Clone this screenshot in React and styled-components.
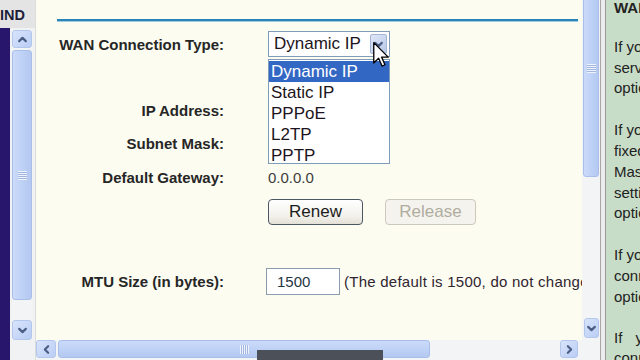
import React from 'react';
import styled, { createGlobalStyle } from 'styled-components';

const Global = createGlobalStyle`
  html, body { margin: 0; padding: 0; width: 640px; height: 360px; overflow: hidden; background: #fcfcf1; }
  * { box-sizing: border-box; }
`;

const Screen = styled.div`
  position: relative;
  width: 640px;
  height: 360px;
  display: flex;
  overflow: hidden;
  font-family: "Liberation Sans", Arial, sans-serif;
`;

/* ---------- left rail ---------- */
const LeftRail = styled.div`
  width: 36px;
  display: flex;
  flex-direction: column;
  background: #f1f2f4;
  border-right: 1px solid #dcdcdc;
`;
const RailHeader = styled.div`
  height: 28px;
  background: #e4e4e4;
  font-weight: bold;
  font-size: 14.5px;
  line-height: 30px;
  color: #1d1d38;
  white-space: nowrap;
  overflow: hidden;
  padding-left: 0;
`;
const RailBody = styled.div`
  flex: 1;
  display: flex;
`;
const NavyStrip = styled.div`
  width: 10px;
  background: #27166b;
`;

/* ---------- scrollbars ---------- */
const VBar = styled.div`
  width: ${p => p.$w}px;
  margin: ${p => p.$m};
  height: ${p => p.$h}px;
  display: flex;
  flex-direction: column;
  overflow: hidden;
  background: #f3f4f6;
`;
const HBar = styled.div`
  height: 18px;
  flex: 1;
  display: flex;
  align-items: stretch;
  background: #f3f4f6;
  padding-right: 4px;
`;
const ArrowBtn = styled.div`
  flex: none;
  width: ${p => p.$w || 'auto'};
  height: ${p => p.$h || 'auto'};
  margin: ${p => p.$m || '0'};
  background: linear-gradient(135deg, #d9e4fb, #b9cdf5);
  border: 1px solid #b3c6ec;
  border-radius: 3px;
  display: flex;
  align-items: center;
  justify-content: center;
`;
const Thumb = styled.div`
  flex: none;
  ${p => p.$vertical ? `height: ${p.$len}px;` : `width: ${p.$len}px;`}
  margin: ${p => p.$m || '0'};
  background: ${p => p.$vertical
    ? 'linear-gradient(90deg, #cbdaf9, #bcd0f6 60%, #b4c8f0)'
    : 'linear-gradient(180deg, #cbdaf9, #bcd0f6 60%, #b4c8f0)'};
  border: 1px solid #a9bfe9;
  border-radius: 3px;
  display: flex;
  align-items: center;
  justify-content: center;
`;
const Grip = styled.div`
  width: 9px;
  height: 9px;
  background: ${p => p.$vertical
    ? 'repeating-linear-gradient(180deg, #eef3fe 0 1px, #a3b6de 1px 2px)'
    : 'repeating-linear-gradient(90deg, #eef3fe 0 1px, #a3b6de 1px 2px)'};
`;
const TrackRest = styled.div`
  flex: 1;
`;

const Chevron = ({ dir }) => {
  const d = {
    up: 'M2,6.5 L5,3.5 L8,6.5',
    down: 'M2,3.5 L5,6.5 L8,3.5',
    left: 'M6.5,2 L3.5,5 L6.5,8',
    right: 'M3.5,2 L6.5,5 L3.5,8',
  }[dir];
  return (
    <svg width="11" height="11" viewBox="0 0 10 10">
      <path d={d} fill="none" stroke="#4b5f86" strokeWidth="2" strokeLinecap="round" strokeLinejoin="round" />
    </svg>
  );
};

/* ---------- frame ---------- */
const Frame = styled.div`
  width: 564px;
  display: flex;
  flex-direction: column;
  background: #f3f4f6;
`;
const FrameTop = styled.div`
  height: 340px;
  display: flex;
`;
const FrameBottom = styled.div`
  height: 20px;
  display: flex;
  padding-bottom: 2px;
`;
const Corner = styled.div`
  width: 18px;
`;

const Content = styled.div`
  width: 546px;
  height: 340px;
  overflow: hidden;
  background: #fcfcf1;
  padding-left: 21px;
  padding-top: 19px;
`;
const Rule = styled.div`
  width: 521px;
  height: 2px;
  background: #2a85b6;
  box-shadow: 0 1px 0 #9ccbe2;
`;

const Row = styled.div`
  display: grid;
  grid-template-columns: 167px 1fr;
  column-gap: 44px;
  align-items: center;
  height: ${p => p.$h}px;
  margin-top: ${p => p.$mt}px;
`;
const Label = styled.div`
  font-size: 15px;
  font-weight: bold;
  color: #262626;
  text-align: right;
  white-space: nowrap;
`;
const Value = styled.div`
  font-size: 15px;
  color: #3c3c3c;
  white-space: nowrap;
  display: flex;
  align-items: center;
`;

/* select */
const SelectWrap = styled.div`
  position: relative;
  width: 122px;
  height: 26px;
`;
const SelectBox = styled.div`
  width: 100%;
  height: 100%;
  border: 1px solid #7f9db9;
  background: #fff;
  display: flex;
  align-items: center;
  padding: 2px;
`;
const SelectText = styled.div`
  flex: 1;
  font-size: 17px;
  color: #1c1420;
  padding-left: 3px;
`;
const SelectBtn = styled.div`
  width: 17px;
  height: 20px;
  background: linear-gradient(135deg, #dfe7f7, #b8c8e8);
  border: 1px solid #a6b7d6;
  border-radius: 2px;
  display: flex;
  align-items: center;
  justify-content: center;
`;
const DropList = styled.div`
  position: absolute;
  top: 28px;
  left: 0;
  width: 122px;
  height: 105px;
  background: #fff;
  border: 1px solid #7f9db9;
  padding: 1px 0 0 0;
  z-index: 2;
`;
const DropItem = styled.div`
  height: 21px;
  line-height: 21px;
  font-size: 17px;
  padding-left: 2px;
  color: ${p => p.$active ? '#fff' : '#1c1420'};
  background: ${p => p.$active ? '#3367c4' : 'transparent'};
`;

/* buttons */
const BtnRow = styled.div`
  display: flex;
  gap: 22px;
`;
const Btn = styled.div`
  width: ${p => p.$w}px;
  height: 26px;
  border: 1px solid ${p => p.$disabled ? '#cbc9bd' : '#4d5763'};
  border-radius: 4px;
  background: ${p => p.$disabled ? '#f4f3ee' : 'linear-gradient(180deg, #ffffff, #f1f0ea 70%, #e2e0d6)'};
  color: ${p => p.$disabled ? '#b0ad9e' : '#1c1c1c'};
  font-size: 17px;
  display: flex;
  align-items: center;
  justify-content: center;
`;

/* mtu */
const Input = styled.div`
  width: 74px;
  height: 27px;
  margin-left: -2px;
  border: 1px solid #8a9cae;
  background: #fff;
  font-size: 15px;
  color: #1f3545;
  padding-left: 10px;
  display: flex;
  align-items: center;
`;
const Hint = styled.span`
  margin-left: 4px;
  font-size: 15px;
  letter-spacing: 0.25px;
  color: #302530;
`;

/* right panel */
const RightPanel = styled.div`
  flex: 1;
  display: flex;
  overflow: hidden;
`;
const Divider = styled.div`
  width: 6px;
  background: #ececec;
  border-left: 1px solid #a6a6a6;
  border-right: 1px solid #9a9a9a;
`;
const Help = styled.div`
  flex: 1;
  background: #c8ddc8;
  padding-left: 8px;
  margin-top: -2px;
  font-size: 15px;
  line-height: 20.8px;
  color: #222;
  white-space: nowrap;
  overflow: hidden;
`;
const HelpTitle = styled.div`
  font-weight: bold;
`;
const HelpPara = styled.div`
  margin-top: ${p => p.$mt}px;
`;
const HelpLine = styled.div`
  word-spacing: ${p => p.$spread ? '9px' : 'normal'};
`;

/* overlays */
const Cursor = styled.svg`
  position: absolute;
  left: 373px;
  top: 42px;
  z-index: 5;
`;
const DarkBar = styled.div`
  position: absolute;
  left: 257px;
  top: 350px;
  width: 126px;
  height: 10px;
  background: #4b5059;
  z-index: 4;
`;

export default function App() {
  const options = ['Dynamic IP', 'Static IP', 'PPPoE', 'L2TP', 'PPTP'];
  return (
    <>
      <Global />
      <Screen>
        <LeftRail>
          <RailHeader>IND</RailHeader>
          <RailBody>
            <NavyStrip />
            <VBar $w={20} $h={310} $m="2px 0 0 2px">
              <ArrowBtn $h="18px"><Chevron dir="up" /></ArrowBtn>
              <Thumb $vertical $len={250} $m="2px 0 0 0"><Grip $vertical /></Thumb>
              <TrackRest />
              <ArrowBtn $h="20px"><Chevron dir="down" /></ArrowBtn>
            </VBar>
          </RailBody>
        </LeftRail>

        <Frame>
          <FrameTop>
            <Content>
              <Rule />
              <Row $h={26} $mt={10}>
                <Label>WAN Connection Type:</Label>
                <Value>
                  <SelectWrap>
                    <SelectBox>
                      <SelectText>Dynamic IP</SelectText>
                      <SelectBtn><Chevron dir="down" /></SelectBtn>
                    </SelectBox>
                    <DropList>
                      {options.map((o, i) => (
                        <DropItem key={o} $active={i === 0}>{o}</DropItem>
                      ))}
                    </DropList>
                  </SelectWrap>
                </Value>
              </Row>
              <Row $h={34} $mt={36}>
                <Label>IP Address:</Label>
                <Value />
              </Row>
              <Row $h={33} $mt={0}>
                <Label>Subnet Mask:</Label>
                <Value />
              </Row>
              <Row $h={34} $mt={0}>
                <Label>Default Gateway:</Label>
                <Value>0.0.0.0</Value>
              </Row>
              <Row $h={26} $mt={5}>
                <Label />
                <BtnRow>
                  <Btn $w={95}>Renew</Btn>
                  <Btn $w={91} $disabled>Release</Btn>
                </BtnRow>
              </Row>
              <Row $h={27} $mt={43}>
                <Label>MTU Size (in bytes):</Label>
                <Value>
                  <Input>1500</Input>
                  <Hint>(The default is 1500, do not change unless necessary.)</Hint>
                </Value>
              </Row>
            </Content>
            <VBar $w={18} $h={340} $m="0">
              <Thumb $vertical $len={217} $m="-40px 1px 0 1px"><Grip $vertical /></Thumb>
              <TrackRest />
              <ArrowBtn $h="20px" $m="0 1px 2px 2px"><Chevron dir="down" /></ArrowBtn>
            </VBar>
          </FrameTop>
          <FrameBottom>
            <HBar>
              <ArrowBtn $w="20px"><Chevron dir="left" /></ArrowBtn>
              <Thumb $len={372} $m="0 0 0 2px"><Grip /></Thumb>
              <TrackRest />
              <ArrowBtn $w="18px"><Chevron dir="right" /></ArrowBtn>
            </HBar>
            <Corner />
          </FrameBottom>
        </Frame>

        <RightPanel>
          <Divider />
          <Help>
            <HelpTitle>WAN Connection Type:</HelpTitle>
            <HelpPara $mt={18}>
              <HelpLine>If your ISP is running a DHCP</HelpLine>
              <HelpLine>server, select Dynamic IP</HelpLine>
              <HelpLine>option.</HelpLine>
            </HelpPara>
            <HelpPara $mt={21}>
              <HelpLine>If your ISP provides a static or</HelpLine>
              <HelpLine>fixed IP Address, Subnet</HelpLine>
              <HelpLine>Mask, Gateway and DNS</HelpLine>
              <HelpLine>setting, select Static IP</HelpLine>
              <HelpLine>option.</HelpLine>
            </HelpPara>
            <HelpPara $mt={21}>
              <HelpLine>If your ISP provides a PPPoE</HelpLine>
              <HelpLine>connection, select PPPoE</HelpLine>
              <HelpLine>option.</HelpLine>
            </HelpPara>
            <HelpPara $mt={20}>
              <HelpLine $spread>If your ISP provides L2TP</HelpLine>
              <HelpLine>connection, select L2TP option.</HelpLine>
            </HelpPara>
          </Help>
        </RightPanel>

        <DarkBar />
        <Cursor width="16" height="25" viewBox="0 0 12 19">
          <path d="M0.5,0.5 L0.5,16 L4.2,12.4 L6.8,18.3 L9,17.3 L6.5,11.5 L11.5,11.5 Z" fill="#fff" stroke="#000" strokeWidth="1" strokeLinejoin="round" />
        </Cursor>
      </Screen>
    </>
  );
}
